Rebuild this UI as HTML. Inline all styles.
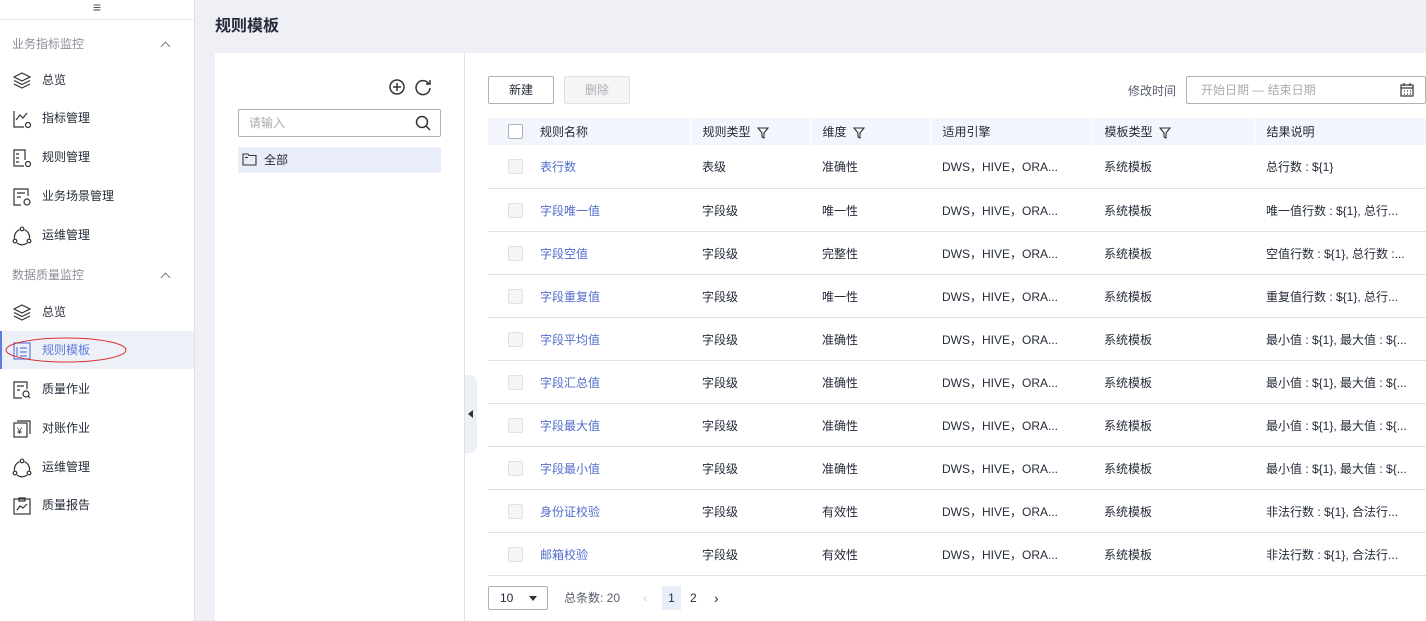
<!DOCTYPE html>
<html><head><meta charset="utf-8"><style>
*{box-sizing:border-box;margin:0;padding:0}
body{width:1426px;height:621px;overflow:hidden;background:#eef0f5;font-family:"Liberation Sans","Noto Sans CJK SC",sans-serif;font-size:12px;color:#252b3a;position:relative}
.sb{position:absolute;left:0;top:0;width:195px;height:621px;background:#fff;border-right:1px solid #dfe1e6}
.sb .top{height:20px;border-bottom:1px solid #e6e8ec;text-align:center;color:#555;font-size:14px;line-height:14px}
.grp{position:absolute;left:12px;color:#8a8e99;font-size:12px}
.car{position:absolute;left:162px;width:7px;height:7px;border-left:1.3px solid #777;border-top:1.3px solid #777;transform:rotate(45deg)}
.it{position:absolute;left:0;width:194px;height:38px;line-height:38px;font-size:12px;color:#252b3a}
.it span{position:absolute;left:42px}
.it svg{position:absolute;left:12px;top:10px}
.it.act{background:#eef0f8;border-left:2px solid #5e7ce0;color:#5e7ce0}
.title{position:absolute;left:215px;top:12px;font-size:16px;font-weight:bold;color:#252b3a}
.panel{position:absolute;left:215px;top:53px;width:1211px;height:568px;background:#fff}
.vdiv{position:absolute;left:464px;top:53px;width:1px;height:568px;background:#dfe1e6}
.handle{position:absolute;left:465px;top:375px;width:12px;height:78px;background:#eef0f8;border-radius:0 8px 8px 0}
.handle:after{content:"";position:absolute;left:3px;top:35px;border-right:5px solid #333;border-top:4px solid transparent;border-bottom:4px solid transparent}
.search{position:absolute;left:238px;top:109px;width:203px;height:28px;border:1px solid #adb0b8;border-radius:2px;color:#aaa;padding-left:10px;line-height:26px}
.tree{position:absolute;left:238px;top:147px;width:203px;height:26px;background:#e9edfa;line-height:26px;padding-left:26px;font-size:12px}
.btn{position:absolute;top:76px;height:28px;width:66px;border:1px solid #adb0b8;border-radius:2px;text-align:center;line-height:26px;background:#fff}
.btn.dis{border-color:#dfe1e6;background:#f5f5f6;color:#adb0b8}
.date{position:absolute;left:1186px;top:76px;width:240px;height:28px;border:1px solid #adb0b8;border-radius:2px;color:#aaa;padding-left:14px;line-height:26px}
table{position:absolute;left:488px;top:118px;width:940px;border-collapse:collapse;font-size:12px}
th{height:27px;background:#f2f5fc;text-align:left;font-weight:normal;color:#252b3a;padding-left:12px;border-left:1px solid #fff}
th:first-child{border-left:none}
td{height:43px;border-bottom:1px solid #dfe1e6;padding-left:12px;padding-top:1px}
td.n{color:#526ecc}
.cb{display:inline-block;width:15px;height:15px;border:1px solid #dfe1e6;background:#f5f5f6;border-radius:2px;vertical-align:middle}
th .cb{background:#fff;border-color:#adb0b8}
.flt{display:inline-block;vertical-align:middle;margin-left:6px}
.pg{position:absolute;top:586px;font-size:12px}
</style></head><body>
<div class="sb">
<div class="top">≡</div>
<div class="grp" style="top:35px">业务指标监控</div><div class="car" style="top:43px"></div>
<div class="it" style="top:61px"><svg width="20" height="18" viewBox="0 0 20 18" fill="none" stroke="#333" stroke-width="1.2"><path d="M10 2 18 6 10 10 2 6Z"/><path d="M2 9.5 10 13.5 18 9.5"/><path d="M2 13 10 17 18 13"/></svg><span>总览</span></div>
<div class="it" style="top:99px"><svg width="20" height="20" viewBox="0 0 20 20" fill="none" stroke="#333" stroke-width="1.2"><path d="M2 2V18H12"/><path d="M4 11 8 6 11 9 15 4"/><circle cx="16" cy="16" r="2.5"/></svg><span>指标管理</span></div>
<div class="it" style="top:138px"><svg width="20" height="20" viewBox="0 0 20 20" fill="none" stroke="#333" stroke-width="1.2"><path d="M12 18H2V2H13V12"/><path d="M4 6H7M4 10H7M4 14H7"/><circle cx="16" cy="16" r="2.5"/></svg><span>规则管理</span></div>
<div class="it" style="top:177px"><svg width="20" height="20" viewBox="0 0 20 20" fill="none" stroke="#333" stroke-width="1.2"><path d="M9 18H2V2H16V9"/><path d="M5 6H13M5 10H9"/><circle cx="15" cy="15" r="3"/></svg><span>业务场景管理</span></div>
<div class="it" style="top:216px"><svg width="20" height="20" viewBox="0 0 20 20" fill="none" stroke="#333" stroke-width="1.2"><circle cx="10" cy="3" r="1.8"/><circle cx="3" cy="15" r="1.8"/><circle cx="17" cy="15" r="1.8"/><path d="M7.5 3.8A8 8 0 0 0 2.5 12.5M12.5 3.8A8 8 0 0 1 17.5 12.5M5 17A8 8 0 0 0 15 17"/></svg><span>运维管理</span></div>
<div class="grp" style="top:266px">数据质量监控</div><div class="car" style="top:274px"></div>
<div class="it" style="top:293px"><svg width="20" height="18" viewBox="0 0 20 18" fill="none" stroke="#333" stroke-width="1.2"><path d="M10 2 18 6 10 10 2 6Z"/><path d="M2 9.5 10 13.5 18 9.5"/><path d="M2 13 10 17 18 13"/></svg><span>总览</span></div>
<div class="it act" style="top:331px"><svg width="20" height="20" viewBox="0 0 20 20" fill="none" stroke="#5e7ce0" stroke-width="1.2" style="left:10px"><rect x="2" y="2" width="16" height="16"/><path d="M5 6V15M8 7H15M8 11H15M8 15H15"/></svg><span style="left:40px">规则模板</span>
<svg width="124" height="30" style="position:absolute;left:2px;top:4px"><ellipse cx="62" cy="15" rx="60" ry="12" fill="none" stroke="#d33" stroke-width="1"/></svg></div>
<div class="it" style="top:370px"><svg width="20" height="20" viewBox="0 0 20 20" fill="none" stroke="#333" stroke-width="1.2"><path d="M10 18H2V2H15V9"/><path d="M5 6H12M5 10H8"/><circle cx="14" cy="14" r="3"/><path d="M16 16 18 18"/></svg><span>质量作业</span></div>
<div class="it" style="top:409px"><svg width="20" height="20" viewBox="0 0 20 20" fill="none" stroke="#333" stroke-width="1.2"><rect x="2" y="4" width="13" height="14"/><path d="M5 2H18V15"/><text x="5" y="15" font-size="9" fill="#333" stroke="none">¥</text></svg><span>对账作业</span></div>
<div class="it" style="top:448px"><svg width="20" height="20" viewBox="0 0 20 20" fill="none" stroke="#333" stroke-width="1.2"><circle cx="10" cy="3" r="1.8"/><circle cx="3" cy="15" r="1.8"/><circle cx="17" cy="15" r="1.8"/><path d="M7.5 3.8A8 8 0 0 0 2.5 12.5M12.5 3.8A8 8 0 0 1 17.5 12.5M5 17A8 8 0 0 0 15 17"/></svg><span>运维管理</span></div>
<div class="it" style="top:486px"><svg width="20" height="20" viewBox="0 0 20 20" fill="none" stroke="#333" stroke-width="1.2"><rect x="2" y="3" width="16" height="15"/><path d="M7 2H13V5H7Z"/><path d="M5 14 8 10 11 12 15 8"/></svg><span>质量报告</span></div>
</div>
<div class="title">规则模板</div>
<div class="panel"></div>
<div class="vdiv"></div>
<div class="handle"></div>
<svg style="position:absolute;left:388px;top:78px" width="44" height="18" viewBox="0 0 44 18" fill="none" stroke="#333" stroke-width="1.5"><circle cx="9" cy="9" r="7"/><path d="M9 5V13M5 9H13"/><path d="M41 6A7 7 0 1 0 42 10"/><path d="M42 2V6H38"/></svg>
<div class="search">请输入<svg style="position:absolute;right:9px;top:5px" width="16" height="16" viewBox="0 0 16 16" fill="none" stroke="#333" stroke-width="1.5"><circle cx="7" cy="7" r="5.5"/><path d="M11 11 15 15"/></svg></div>
<div class="tree"><svg style="position:absolute;left:4px;top:6px" width="15" height="13" viewBox="0 0 15 13" fill="none" stroke="#333" stroke-width="1.1"><path d="M1 1H6L7 2.5H14V12H1Z"/><path d="M3 4.5H6"/></svg>全部</div>
<div class="btn" style="left:488px">新建</div>
<div class="btn dis" style="left:564px">删除</div>
<div style="position:absolute;left:1128px;top:82px;color:#575d6c">修改时间</div>
<div class="date">开始日期 — 结束日期<svg style="position:absolute;left:213px;top:6px" width="14" height="14" viewBox="0 0 14 14" fill="none" stroke="#333" stroke-width="1.2"><rect x="1" y="2" width="12" height="11"/><path d="M4 0V3M10 0V3M1 5H13"/><path d="M4 8H5M7 8H8M10 8H11M4 11H5M7 11H8M10 11H11"/></svg></div>
<table>
<colgroup><col style="width:40px"><col style="width:162px"><col style="width:120px"><col style="width:120px"><col style="width:162px"><col style="width:162px"><col style="width:174px"></colgroup>
<tr><th style="padding-left:20px"><span class="cb"></span></th><th style="padding-left:12px;border-left:none">规则名称</th><th>规则类型<svg class="flt" width="12" height="12" viewBox="0 0 12 12" fill="none" stroke="#333" stroke-width="1.1"><path d="M1 1H11L7 6V11L5 10V6Z"/></svg></th><th>维度<svg class="flt" width="12" height="12" viewBox="0 0 12 12" fill="none" stroke="#333" stroke-width="1.1"><path d="M1 1H11L7 6V11L5 10V6Z"/></svg></th><th>适用引擎</th><th>模板类型<svg class="flt" width="12" height="12" viewBox="0 0 12 12" fill="none" stroke="#333" stroke-width="1.1"><path d="M1 1H11L7 6V11L5 10V6Z"/></svg></th><th>结果说明</th></tr>
<tr><td style="padding-left:20px"><span class="cb"></span></td><td class="n">表行数</td><td>表级</td><td>准确性</td><td>DWS，HIVE，ORA...</td><td>系统模板</td><td>总行数 : ${1}</td></tr>
<tr><td style="padding-left:20px"><span class="cb"></span></td><td class="n">字段唯一值</td><td>字段级</td><td>唯一性</td><td>DWS，HIVE，ORA...</td><td>系统模板</td><td>唯一值行数 : ${1}, 总行...</td></tr>
<tr><td style="padding-left:20px"><span class="cb"></span></td><td class="n">字段空值</td><td>字段级</td><td>完整性</td><td>DWS，HIVE，ORA...</td><td>系统模板</td><td>空值行数 : ${1}, 总行数 :...</td></tr>
<tr><td style="padding-left:20px"><span class="cb"></span></td><td class="n">字段重复值</td><td>字段级</td><td>唯一性</td><td>DWS，HIVE，ORA...</td><td>系统模板</td><td>重复值行数 : ${1}, 总行...</td></tr>
<tr><td style="padding-left:20px"><span class="cb"></span></td><td class="n">字段平均值</td><td>字段级</td><td>准确性</td><td>DWS，HIVE，ORA...</td><td>系统模板</td><td>最小值 : ${1}, 最大值 : ${...</td></tr>
<tr><td style="padding-left:20px"><span class="cb"></span></td><td class="n">字段汇总值</td><td>字段级</td><td>准确性</td><td>DWS，HIVE，ORA...</td><td>系统模板</td><td>最小值 : ${1}, 最大值 : ${...</td></tr>
<tr><td style="padding-left:20px"><span class="cb"></span></td><td class="n">字段最大值</td><td>字段级</td><td>准确性</td><td>DWS，HIVE，ORA...</td><td>系统模板</td><td>最小值 : ${1}, 最大值 : ${...</td></tr>
<tr><td style="padding-left:20px"><span class="cb"></span></td><td class="n">字段最小值</td><td>字段级</td><td>准确性</td><td>DWS，HIVE，ORA...</td><td>系统模板</td><td>最小值 : ${1}, 最大值 : ${...</td></tr>
<tr><td style="padding-left:20px"><span class="cb"></span></td><td class="n">身份证校验</td><td>字段级</td><td>有效性</td><td>DWS，HIVE，ORA...</td><td>系统模板</td><td>非法行数 : ${1}, 合法行...</td></tr>
<tr><td style="padding-left:20px"><span class="cb"></span></td><td class="n">邮箱校验</td><td>字段级</td><td>有效性</td><td>DWS，HIVE，ORA...</td><td>系统模板</td><td>非法行数 : ${1}, 合法行...</td></tr>
</table>
<div class="pg" style="left:488px;width:60px;height:24px;border:1px solid #adb0b8;border-radius:2px;line-height:22px;padding-left:11px">10<span style="position:absolute;left:40px;top:9px;border-top:5px solid #333;border-left:4px solid transparent;border-right:4px solid transparent"></span></div>
<div class="pg" style="left:564px;line-height:24px;color:#575d6c">总条数: 20</div>
<div class="pg" style="left:643px;line-height:24px;color:#ccc">‹</div>
<div class="pg" style="left:662px;width:19px;height:24px;background:#e9edfa;text-align:center;line-height:24px">1</div>
<div class="pg" style="left:690px;line-height:24px">2</div>
<div class="pg" style="left:714px;line-height:24px;font-size:14px">›</div>
</body></html>
